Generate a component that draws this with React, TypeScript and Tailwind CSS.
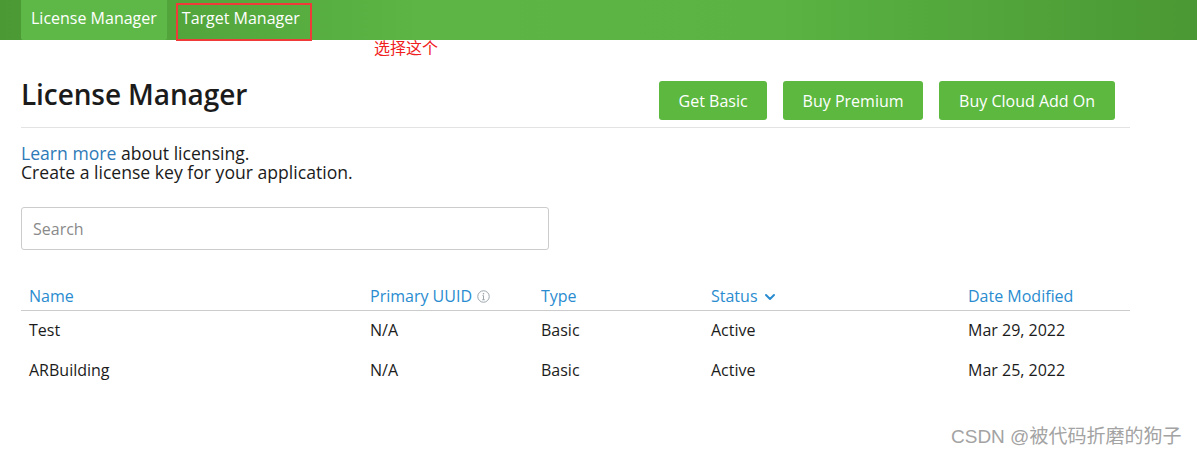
import { ChevronDown } from "lucide-react";

const COLS = "grid grid-cols-[341px_171px_170px_257px_1fr]";

const licenses = [
  { name: "Test", uuid: "N/A", type: "Basic", status: "Active", date: "Mar 29, 2022" },
  { name: "ARBuilding", uuid: "N/A", type: "Basic", status: "Active", date: "Mar 25, 2022" },
];

function InfoIcon() {
  return (
    <svg width="13" height="13" viewBox="0 0 12 12" className="ml-[5px] mt-[1px]">
      <circle cx="6" cy="6" r="5.3" fill="none" stroke="#9aa3ab" strokeWidth="0.9" />
      <circle cx="6" cy="3.5" r="0.75" fill="#9aa3ab" />
      <path d="M6 5.2v3.8M4.8 9h2.4M5 5.2h1" stroke="#9aa3ab" strokeWidth="0.9" fill="none" />
    </svg>
  );
}

export default function App() {
  return (
    <div className="relative w-[1197px] h-[454px] bg-white font-['Open_Sans',sans-serif] text-[#1b1b1b]">
      <nav className="flex h-10 px-[21px] bg-[linear-gradient(90deg,#4b9934_0%,#5cb545_35%,#5ab343_65%,#4a9833_100%)]">
        <span className="flex items-center px-[10px] pb-[5px] bg-[#5eb847] text-white text-[16px] rounded-b-[2px]">
          License Manager
        </span>
        <span className="flex items-center ml-[9px] h-[38px] mt-[3px] pb-[8px] pl-[4px] pr-[10px] text-white text-[16px] border-2 border-[#f03a3a]">
          Target Manager
        </span>
        <span className="absolute left-[374px] top-[35px] text-[16px] text-[#f02020] font-['Noto_Sans_CJK_SC',sans-serif]">
          选择这个
        </span>
      </nav>

      <div className="ml-[21px] w-[1109px]">
        <div className="flex items-center justify-between pt-[41px] pb-[7px] border-b border-[#e3e3e3]">
          <h1 className="text-[28px] font-semibold leading-none mt-[-14px] tracking-[-0.1px]">License Manager</h1>
          <div className="flex gap-4 mr-[15px]">
            <button className="h-[39px] px-[19.5px] rounded-[3px] bg-[#5cb83f] text-white text-[16px]">Get Basic</button>
            <button className="h-[39px] px-[19.5px] rounded-[3px] bg-[#5cb83f] text-white text-[16px]">Buy Premium</button>
            <button className="h-[39px] px-5 rounded-[3px] bg-[#5cb83f] text-white text-[16px]">Buy Cloud Add On</button>
          </div>
        </div>

        <div className="mt-[16px] text-[17.6px] leading-[19px]">
          <div className="h-[19px]">
            <a className="text-[#2e7ab8]">Learn more</a> about licensing.
          </div>
          <div className="h-[19px]">Create a license key for your application.</div>
        </div>

        <div className="mt-[25px] w-[528px] h-[43px] flex items-center pl-[11px] border border-[#cccccc] rounded-[3px] text-[16px] text-[#8a8a8a]">
          Search
        </div>

        <div className="mt-[34px]">
          <div className={`${COLS} h-[27px] items-start border-b border-[#cccccc] text-[16px] text-[#2a8cd0]`}>
            <span className="pl-2">Name</span>
            <span className="pl-2 flex items-center">
              Primary UUID
              <InfoIcon />
            </span>
            <span className="pl-2">Type</span>
            <span className="pl-2 flex items-center">
              Status
              <ChevronDown className="ml-1 mt-[2px] w-4 h-4" strokeWidth={3} />
            </span>
            <span className="pl-2">Date Modified</span>
          </div>
          {licenses.map((l) => (
            <div key={l.name} className={`${COLS} h-10 pb-[2px] items-center text-[16px]`}>
              <span className="pl-2">{l.name}</span>
              <span className="pl-2">{l.uuid}</span>
              <span className="pl-2">{l.type}</span>
              <span className="pl-2">{l.status}</span>
              <span className="pl-2">{l.date}</span>
            </div>
          ))}
        </div>
      </div>

      <span className="absolute left-[951px] top-[423px] text-[19px] text-[#a3a3a3] font-['Liberation_Sans','Noto_Sans_CJK_SC',sans-serif]">
        CSDN @被代码折磨的狗子
      </span>
    </div>
  );
}
